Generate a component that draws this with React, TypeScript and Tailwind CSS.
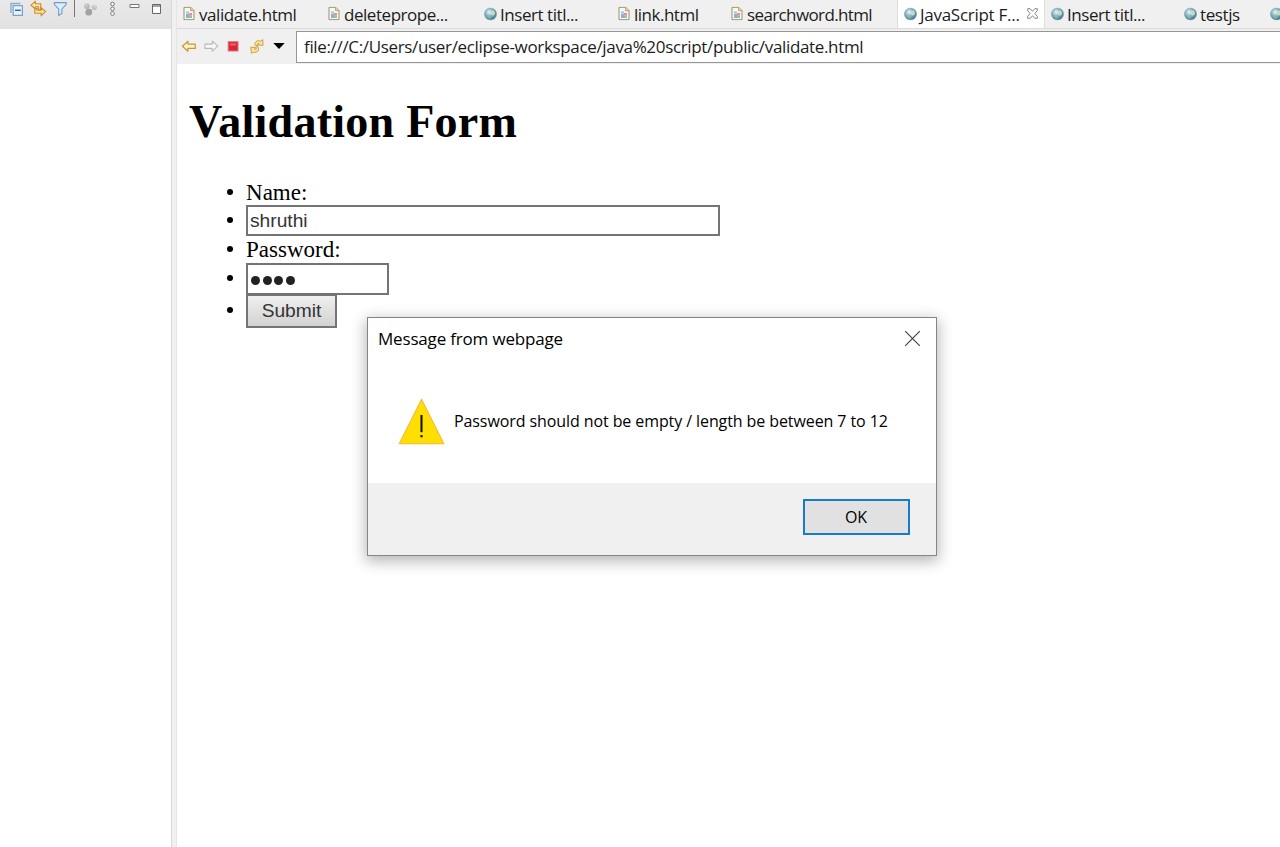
import type { ReactNode } from "react";

function FileIcon() {
  return (
    <svg width="12" height="14" viewBox="0 0 12 14" className="ml-[0.5px] shrink-0 -translate-y-[0.5px]">
      <path d="M1 .8h6.8L11 4v9.2H1z" fill="#f5f8f6" stroke="#9c9162" />
      <path d="M7.6 1v3.2H11" fill="#ead59a" stroke="#b09449" strokeWidth=".8" />
      <path d="M3 5h3v2H3z" fill="#8fd0c4" />
      <path d="M3 7.4h3v4H3z" fill="#9aa6de" />
      <path d="M6 6.6h3v2.6H6z" fill="#e0909c" />
      <path d="M6 9.4h3v2H6z" fill="#8cc4b4" />
    </svg>
  );
}

function GlobeIcon() {
  return (
    <svg width="13" height="13" viewBox="0 0 13 13" className="ml-[0.5px] shrink-0 -translate-y-[0.5px]">
      <defs>
        <radialGradient id="globe" cx=".4" cy=".35" r=".7">
          <stop offset="0" stopColor="#f0f8f8" />
          <stop offset=".4" stopColor="#8fbccd" />
          <stop offset="1" stopColor="#2f6a90" />
        </radialGradient>
      </defs>
      <circle cx="6.5" cy="6.5" r="6.1" fill="url(#globe)" stroke="#7b9cab" strokeWidth=".5" />
      <path d="M6.6 4.4l2.8-1.6 1.6 1.6-.2 2.8-2 1-1.8-1.2z" fill="#d6e4b8" opacity=".8" />
      <path d="M3 7.4l3 .6 1.4 1.6-1.2 1.8L3.2 10z" fill="#8cc08a" opacity=".7" />
    </svg>
  );
}

type TabProps = { width: string; label: string; text: string; icon: ReactNode; active?: boolean };

const tabs: TabProps[] = [
  { width: "w-[145px]", label: "validate.html", text: "w-[98px] tracking-[-0.42px]", icon: <FileIcon /> },
  { width: "w-[156px]", label: "deleteprope...", text: "w-[105px] tracking-[-0.46px]", icon: <FileIcon /> },
  { width: "w-[134px]", label: "Insert titl...", text: "w-[78px] tracking-[-0.45px]", icon: <GlobeIcon /> },
  { width: "w-[113px]", label: "link.html", text: "w-[65px] tracking-[-0.5px]", icon: <FileIcon /> },
  { width: "w-[172px]", label: "searchword.html", text: "w-[127px] tracking-[-0.62px]", icon: <FileIcon /> },
  { width: "w-[148px]", label: "JavaScript F...", text: "w-[102px] tracking-[-0.27px]", icon: <GlobeIcon />, active: true },
  { width: "w-[133px]", label: "Insert titl...", text: "w-[78px] tracking-[-0.45px]", icon: <GlobeIcon /> },
  { width: "w-[86px]", label: "testjs", text: "w-[40px] tracking-[-0.4px]", icon: <GlobeIcon /> },
  { width: "w-[40px]", label: "", text: "w-0", icon: <GlobeIcon /> },
];

function Tab({ width, label, text, icon, active }: TabProps) {
  return (
    <div
      className={`${width} flex h-full shrink-0 items-center pl-[5px] ${
        active ? "border-x border-[#dedede] bg-white" : ""
      }`}
    >
      <span className="flex w-[17px] shrink-0 items-center">{icon}</span>
      <span className={`${text} shrink-0 pt-[2px] text-[17px] leading-6 whitespace-nowrap`}>{label}</span>
      {active && (
        <svg width="11" height="11" viewBox="0 0 11 11" className="ml-[5px] shrink-0 -translate-y-px">
          <path
            d="M.7.7h2.5l2.3 2.6L7.8.7h2.5v2L7.8 5.5l2.5 2.8v2H7.8L5.5 7.7l-2.3 2.6H.7v-2l2.5-2.8L.7 2.7z"
            fill="#fff"
            stroke="#777"
            strokeWidth=".9"
          />
        </svg>
      )}
    </div>
  );
}

function ViewToolbar() {
  return (
    <div className="h-[29px] bg-linear-to-b from-[#e9e9e9] to-[#e2e2e2]">
      <svg width="171" height="20" viewBox="0 0 171 20" fill="none">
        <path d="M11 13V3.5h9.5" stroke="#8eb0cc" strokeWidth="1.5" />
        <path d="M13.2 5.7h9.2v9.6h-9.2z" fill="#e5f3fc" stroke="#7ba3c6" strokeWidth="1.2" />
        <path d="M15 10.3h5.8" stroke="#39658e" strokeWidth="1.4" />
        <path d="M31 5.2l4.3-3.8v2.3h5.4v5.5h-2.4V6.8h-3V9z" fill="#fbe5a9" stroke="#ca8b28" strokeWidth="1.1" />
        <path d="M45.5 11.6l-4.3 4v-2.4h-6.4V8.6h2.3v1.7h4.1V7.8z" fill="#fbe5a9" stroke="#ca8b28" strokeWidth="1.1" />
        <path d="M54.3 2.6h11.9v1.8l-4.3 4.8v4.3l-3.2 2V9.2l-4.4-4.8z" fill="#dcedfb" stroke="#719dc5" strokeWidth="1.1" />
        <path d="M74.5 0v17" stroke="#777" />
        <circle cx="87" cy="6.2" r="2.8" fill="#b8b8b8" />
        <circle cx="94.3" cy="7.5" r="2.6" fill="#c0c0c0" />
        <circle cx="88.8" cy="12.2" r="3.4" fill="#a2a2a2" />
        <circle cx="94.8" cy="6.5" r="1" fill="#ddd" />
        <circle cx="86.4" cy="5.4" r="1" fill="#ddd" />
        <circle cx="112.5" cy="4" r="1.8" stroke="#777" fill="#fff" />
        <circle cx="112.5" cy="8.8" r="1.8" stroke="#777" fill="#fff" />
        <circle cx="112.5" cy="13.6" r="1.8" stroke="#777" fill="#fff" />
        <path d="M130 4.5h9v3h-9z" fill="#fff" stroke="#777" />
        <path d="M152.5 4.5h8v9h-8z" fill="#fff" stroke="#666" />
        <path d="M152 6h9" stroke="#666" strokeWidth="1.2" />
      </svg>
    </div>
  );
}

function BrowserBar() {
  return (
    <div className="flex h-[35px] shrink-0 items-start bg-[#f0f0f0] pt-[2px]">
      <svg width="119" height="31" viewBox="177 31 119 31" fill="none" className="shrink-0">
        <path d="M182.4 46.2l5.5-5v2.9h7.4v4.3h-7.4v2.8z" fill="#fff3ca" stroke="#c79733" strokeWidth="1.2" strokeLinejoin="round" />
        <path d="M217.8 46.2l-5.5-5v2.9h-7.4v4.3h7.4v2.8z" fill="#f8f8f8" stroke="#b8b8b8" strokeWidth="1.1" strokeLinejoin="round" />
        <rect x="228.2" y="41.7" width="9.8" height="9.3" fill="#dc2635" stroke="#d97777" />
        <path d="M230 43.5h6v2h-6z" fill="#ef6570" />
        <path
          d="M255.2 45.6c-1.4-3.4 2.2-6 5.2-4.4l2.4-1.6.2 5.8-5.2-.6 1.2-1.4c-1.4-.4-2 1-1 2.2z"
          fill="#fae3a0"
          stroke="#cf9f3f"
          strokeWidth="1"
          strokeLinejoin="round"
        />
        <path
          d="M257.8 46.4c2.4 3.4-.6 6.8-4.2 5.8l-2.2 1-.6-6 5 .4-1.2 1.6c1.6.6 2.4-.6 1.4-1.8z"
          fill="#fae3a0"
          stroke="#cf9f3f"
          strokeWidth="1"
          strokeLinejoin="round"
        />
        <path d="M273.3 43h11.4l-5.7 6z" fill="#000" />
      </svg>
      <div className="flex h-8 flex-1 items-center border border-r-0 border-[#969696] bg-white pl-[7px] text-[17px] tracking-[-0.34px] whitespace-nowrap">
        file:///C:/Users/user/eclipse-workspace/java%20script/public/validate.html
      </div>
    </div>
  );
}

function Row({ height, bullet, children }: { height: string; bullet: string; children: ReactNode }) {
  return (
    <li className={`${height} flex items-start`}>
      <span className={`${bullet} flex w-[19px] shrink-0`}>
        <span className="size-[6px] rounded-full bg-black" />
      </span>
      {children}
    </li>
  );
}

function FormPage() {
  return (
    <main className="flex-1 bg-white pl-[12px] font-['Liberation_Serif',serif] text-[23.04px] text-black">
      <h1 className="pt-[31px] text-[46.08px] leading-[53px] font-bold tracking-[0.23px]">Validation Form</h1>
      <ul className="pt-[30px] pl-[38px]">
        <Row height="h-[27px]" bullet="pt-[11px]">
          <span className="pt-px leading-[27px]">Name:</span>
        </Row>
        <Row height="h-[31px]" bullet="pt-[12px]">
          <div className="flex h-[31px] w-[474px] items-center border-2 border-[#747474] pt-[2px] pl-[2px] font-['Liberation_Sans',sans-serif] text-[19.2px] text-[#333]">
            shruthi
          </div>
        </Row>
        <Row height="h-[27px]" bullet="pt-[10px]">
          <span className="leading-[27px]">Password:</span>
        </Row>
        <Row height="h-[31px]" bullet="pt-[12px]">
          <div className="flex h-8 w-[143px] items-center gap-[2.6px] border-2 border-[#747474] pt-[3px] pl-[3px]">
            <i className="size-[9px] rounded-full bg-[#222]" />
            <i className="size-[9px] rounded-full bg-[#222]" />
            <i className="size-[9px] rounded-full bg-[#222]" />
            <i className="size-[9px] rounded-full bg-[#222]" />
          </div>
        </Row>
        <Row height="h-[34px]" bullet="pt-[13px]">
          <button className="flex h-[34px] w-[91px] items-center justify-center border-2 border-[#747474] bg-linear-to-b from-[#efefef] to-[#d2d2d2] font-['Liberation_Sans',sans-serif] text-[19.2px] text-[#333]">
            Submit
          </button>
        </Row>
      </ul>
    </main>
  );
}

function Dialog() {
  return (
    <div className="absolute top-[317px] left-[367px] flex h-[239px] w-[570px] flex-col border border-[#858585] bg-white text-black shadow-[0_4px_14px_1px_rgba(0,0,0,0.3)]">
      <div className="flex h-[41px] shrink-0 items-center justify-between pr-[15px] pl-[10px]">
        <span className="text-[17px] tracking-[-0.18px] whitespace-nowrap">Message from webpage</span>
        <svg width="17" height="17" viewBox="0 0 17 17">
          <path d="M1.2 1.2l14.6 14.6M15.8 1.2L1.2 15.8" stroke="#444" strokeWidth="1.2" />
        </svg>
      </div>
      <div className="flex h-[124px] shrink-0 items-start pt-[38px] pl-[30px]">
        <svg width="48" height="48" viewBox="0 0 48 48" className="shrink-0">
          <path d="M23.5 2.4L1.3 46.6h44.5z" fill="#ffdf00" stroke="#f8bd38" strokeWidth="1.2" />
          <path d="M23.5 18v17.2" stroke="#161600" strokeWidth="2.1" />
          <path d="M23.5 38v2.3" stroke="#161600" strokeWidth="2.2" />
        </svg>
        <span className="pt-[12px] pl-[8px] text-[16px] leading-6 tracking-[-0.09px] whitespace-nowrap">
          Password should not be empty / length be between 7 to 12
        </span>
      </div>
      <div className="flex flex-1 items-start justify-end bg-[#f0f0f0] pt-[16px] pr-[26.5px]">
        <button className="flex h-[36px] w-[107px] items-center justify-center border-2 border-[#1979ca] bg-[#e1e1e1] text-[16px]">OK</button>
      </div>
    </div>
  );
}

export default function App() {
  return (
    <div className="relative flex h-[847px] w-[1280px] overflow-hidden bg-white font-['Open_Sans',sans-serif] text-[#1c1c1c]">
      <aside className="w-[171px] shrink-0 bg-white">
        <ViewToolbar />
      </aside>
      <div className="w-[6px] shrink-0 border-x border-[#d9d9d9] border-r-[#e5e5e5] bg-[#f0f0f0]" />
      <div className="flex min-w-0 flex-1 flex-col">
        <div className="flex h-[29px] shrink-0 overflow-hidden border-b border-[#d9d9d9] bg-[#f0f0f0]">
          {tabs.map((tab, i) => (
            <Tab key={i} {...tab} />
          ))}
        </div>
        <BrowserBar />
        <FormPage />
      </div>
      <Dialog />
    </div>
  );
}
